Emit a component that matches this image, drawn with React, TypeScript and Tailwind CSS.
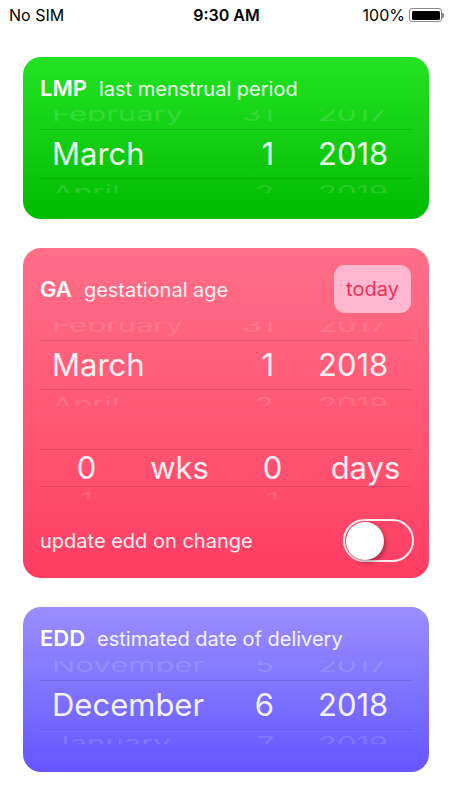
import React from 'react';

type Col = { cls: string; prev?: string; cur: string; next?: string };

// month / day / year columns, each given as [above, selected, below]
const dateCols = (m: string[], d: string[], y: string[]): Col[] => [
  { cls: 'flex-1 pl-[12px] text-left', prev: m[0], cur: m[1], next: m[2] },
  { cls: 'w-[40px] text-right', prev: d[0], cur: d[1], next: d[2] },
  { cls: 'w-[138px] pl-[44px] text-left', prev: y[0], cur: y[1], next: y[2] },
];

function Wheel({ cols, topCls, rowCls, botCls }: { cols: Col[]; topCls: string; rowCls: string; botCls: string }) {
  return (
    <div className="flex flex-col text-[31px]">
      {/* row above, squashed like a wheel */}
      <div className={`flex items-end overflow-hidden ${topCls}`}>
        <div className="flex w-full origin-bottom scale-y-[0.6] leading-[30px] text-white/15">
          {cols.map((c, i) => (
            <span key={i} className={c.cls}>{c.prev ?? '\u00a0'}</span>
          ))}
        </div>
      </div>
      <div className={`flex items-center border-y border-black/10 text-white/90 ${rowCls}`}>
        {cols.map((c, i) => (
          <span key={i} className={c.cls}>{c.cur}</span>
        ))}
      </div>
      <div className={`flex items-start overflow-hidden ${botCls}`}>
        <div className="flex w-full origin-top scale-y-[0.6] leading-[30px] text-white/15">
          {cols.map((c, i) => (
            <span key={i} className={c.cls}>{c.next ?? '\u00a0'}</span>
          ))}
        </div>
      </div>
    </div>
  );
}

function Header({ tag, label }: { tag: string; label: string }) {
  return (
    <div className="flex items-baseline gap-[12px] h-[22px] leading-[22px] px-[17px]">
      <span className="text-[22px] font-semibold text-white">{tag}</span>
      <span className="text-[20px] text-white/90">{label}</span>
    </div>
  );
}

export default function App() {
  return (
    <div className="w-[451px] h-[800px] bg-white overflow-hidden" style={{ fontFamily: 'Inter, "Noto Sans", sans-serif' }}>
      {/* STATUS BAR */}
      <div className="h-[30px] flex items-center justify-between pl-[9px] pr-[7px] text-[16px] text-black">
        <span className="w-[120px]">No SIM</span>
        <span className="font-semibold">9:30 AM</span>
        <div className="w-[120px] flex items-center justify-end gap-[4px]">
          <span>100%</span>
          <div className="flex items-center">
            <div className="w-[33px] h-[14px] rounded-[3px] border border-[#8a8a8a] p-[1.5px]">
              <div className="w-full h-full rounded-[1.5px] bg-black" />
            </div>
            <div className="w-[2px] h-[5px] rounded-r-[1px] bg-[#8a8a8a]" />
          </div>
        </div>
      </div>

      <div className="flex flex-col gap-[29px] pt-[27px] pl-[23px] pr-[22px]">
        {/* LMP */}
        <div className="rounded-[18px] bg-gradient-to-b from-[#22e322] to-[#00bb00] pt-[20px] pb-[23px]">
          <Header tag="LMP" label="last menstrual period" />
          <div className="px-[17px]">
            <Wheel
              cols={dateCols(['February', 'March', 'April'], ['31', '1', '2'], ['2017', '2018', '2019'])}
              topCls="mt-[11px] h-[19px] pb-[6px]"
              rowCls="h-[50px]"
              botCls="h-[14px] pt-[4px] mb-[3px]"
            />
          </div>
        </div>

        {/* GA */}
        <div className="rounded-[18px] bg-gradient-to-b from-[#ff6e88] to-[#ff3c62] pt-[17px] pb-[16px]">
          <div className="flex items-center justify-between pr-[18px]">
            <Header tag="GA" label="gestational age" />
            <button className="h-[48px] w-[77px] rounded-[11px] bg-[#ffb6cf] text-[20px] text-[#f02e5a]">today</button>
          </div>
          <div className="px-[17px]">
            <Wheel
              cols={dateCols(['February', 'March', 'April'], ['31', '1', '2'], ['2017', '2018', '2019'])}
              topCls="mt-[9px] h-[18px] pb-[6px]"
              rowCls="h-[50px]"
              botCls="h-[16px] pt-[5px] mb-[7px]"
            />
            <Wheel
              cols={[
                { cls: 'flex-1 text-center', cur: '0', next: '1' },
                { cls: 'flex-1 text-center', cur: 'wks' },
                { cls: 'flex-1 text-center', cur: '0', next: '1' },
                { cls: 'flex-1 text-center', cur: 'days' },
              ]}
              topCls="h-[36px]"
              rowCls="h-[38px]"
              botCls="h-[13px] pt-[3px] mb-[4px]"
            />
          </div>
          <div className="mt-[15px] flex items-center justify-between pl-[17px] pr-[15px]">
            <span className="text-[20px] text-white/90">update edd on change</span>
            <div className="w-[71px] h-[43px] rounded-full border-2 border-white/90 flex items-center p-[1px]">
              <div className="w-[38px] h-[38px] rounded-full bg-white shadow-[2px_3px_4px_rgba(0,0,0,0.3)]" />
            </div>
          </div>
        </div>

        {/* EDD */}
        <div className="rounded-[18px] bg-gradient-to-b from-[#9b8dff] to-[#6654ff] pt-[20px] pb-[25px]">
          <Header tag="EDD" label="estimated date of delivery" />
          <div className="px-[17px]">
            <Wheel
              cols={dateCols(['November', 'December', 'January'], ['5', '6', '7'], ['2017', '2018', '2019'])}
              topCls="mt-[12px] h-[19px] pb-[6px]"
              rowCls="h-[50px]"
              botCls="h-[14px] pt-[4px] mb-[3px]"
            />
          </div>
        </div>
      </div>
    </div>
  );
}
